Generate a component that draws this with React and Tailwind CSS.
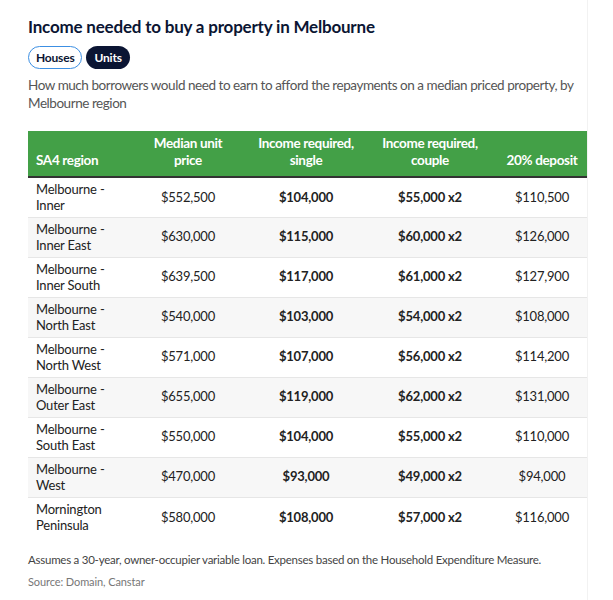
const ROWS = [
  ['Melbourne - Inner', '$552,500', '$104,000', '$55,000 x2', '$110,500'],
  ['Melbourne - Inner East', '$630,000', '$115,000', '$60,000 x2', '$126,000'],
  ['Melbourne - Inner South', '$639,500', '$117,000', '$61,000 x2', '$127,900'],
  ['Melbourne - North East', '$540,000', '$103,000', '$54,000 x2', '$108,000'],
  ['Melbourne - North West', '$571,000', '$107,000', '$56,000 x2', '$114,200'],
  ['Melbourne - Outer East', '$655,000', '$119,000', '$62,000 x2', '$131,000'],
  ['Melbourne - South East', '$550,000', '$104,000', '$55,000 x2', '$110,000'],
  ['Melbourne - West', '$470,000', '$93,000', '$49,000 x2', '$94,000'],
  ['Mornington Peninsula', '$580,000', '$108,000', '$57,000 x2', '$116,000'],
];

export default function App() {
  return (
    <div className="min-h-[600px] w-full bg-white font-['Lato','Liberation_Sans',sans-serif]">
      <div className="w-[588px] border-r border-[#f2f2f2] pl-[28px] pt-[16px] pb-[8px] min-h-[600px]">
        <h1 className="text-[17px] leading-[22px] font-bold text-[#0b1533] tracking-[-0.2px]">
          Income needed to buy a property in Melbourne
        </h1>
        <div className="flex gap-[4px] mt-[8px]">
          <button className="h-[23px] px-[7px] rounded-full border-[1.5px] border-[#3c8fe3] bg-white text-[12px] font-bold text-[#0b1533] tracking-[-0.2px]">
            Houses
          </button>
          <button className="h-[23px] px-[8px] rounded-full bg-[#0b1533] text-[12px] font-bold text-white tracking-[-0.2px]">
            Units
          </button>
        </div>
        <p className="mt-[7px] text-[13.5px] leading-[18px] text-[#555555] tracking-[-0.45px] pr-[4px]">
          How much borrowers would need to earn to afford the repayments on a median priced property, by Melbourne region
        </p>
        <table className="mt-[19px] w-[559px] table-fixed border-collapse text-[13px] text-[#222222] tracking-[-0.2px]">
          <colgroup>
            <col className="w-[99px]" />
            <col className="w-[122px]" />
            <col className="w-[114px]" />
            <col className="w-[134px]" />
            <col className="w-[90px]" />
          </colgroup>
          <thead>
            <tr className="bg-[#43a047] text-white text-[13.5px] leading-[17px] font-bold border-b-2 border-[#333333] tracking-[-0.35px]">
              <th className="h-[46px] px-[8px] text-left align-bottom pb-[7px] font-bold">SA4 region</th>
              <th className="px-[22px] text-center align-bottom pb-[7px] font-bold">Median unit price</th>
              <th className="px-[4px] text-center align-bottom pb-[7px] font-bold">Income required, single</th>
              <th className="px-[4px] text-center align-bottom pb-[7px] font-bold">Income required, couple</th>
              <th className="px-[4px] text-center align-bottom pb-[7px] font-bold">20% deposit</th>
            </tr>
          </thead>
          <tbody>
            {ROWS.map((r, i) => (
              <tr
                key={r[0]}
                className={`${i % 2 === 1 ? 'bg-[#f7f7f7]' : 'bg-white'} ${i < ROWS.length - 1 ? 'border-b border-[#e6e6e6]' : ''}`}
              >
                <td className="h-[40px] px-[8px] leading-[16px] text-left">{r[0]}</td>
                <td className="text-center">{r[1]}</td>
                <td className="text-center font-bold">{r[2]}</td>
                <td className="text-center font-bold">{r[3]}</td>
                <td className="text-center">{r[4]}</td>
              </tr>
            ))}
          </tbody>
        </table>
        <p className="mt-[15px] text-[11.5px] leading-[16px] text-[#444444] tracking-[-0.25px]">
          Assumes a 30-year, owner-occupier variable loan. Expenses based on the Household Expenditure Measure.
        </p>
        <p className="mt-[7px] text-[11px] leading-[14px] text-[#777777] tracking-[-0.1px]">Source: Domain, Canstar</p>
      </div>
    </div>
  );
}
